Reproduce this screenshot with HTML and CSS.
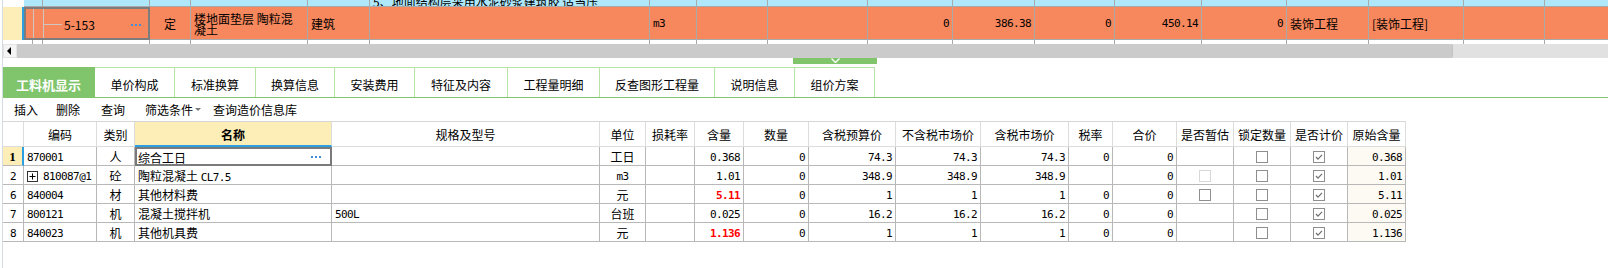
FILE: index.html
```html
<!DOCTYPE html>
<html lang="zh-CN">
<head>
    <meta charset="UTF-8">
    <title>工料机显示</title>
    <link rel="stylesheet" href="styles.css">
</head>
<body>
<div class="app">
    <div class="upper">
        <div class="ugrid">
            <!-- previous row, scrolled mostly out of view -->
            <div class="uc rh plain"></div>
            <div class="uc blue span2"></div>
            <div class="uc blue"></div>
            <div class="uc blue"></div>
            <div class="uc blue"></div>
            <div class="uc blue"></div>
            <div class="uc blue"><span class="cut">5、地面结构层采用水泥砂浆建筑胶 适当压</span></div>
            <div class="uc blue"></div>
            <div class="uc blue"></div>
            <div class="uc blue"></div>
            <div class="uc blue"></div>
            <div class="uc blue"></div>
            <div class="uc blue"></div>
            <div class="uc blue"></div>
            <div class="uc blue"></div>
            <div class="uc blue"></div>
            <div class="uc blue"></div>
            <div class="uc blue"></div>
            <div class="uc blue"></div>

            <!-- current row -->
            <div class="uc rh cur-rh"></div>
            <div class="uc orange sel tree span3">
                <span class="tl"></span><span class="tl tl2"></span><span class="branch"></span>
                <span class="code">5-153</span>
                <span class="dots"><i></i><i></i><i></i></span>
            </div>
            <div class="uc orange center">定</div>
            <div class="uc orange wrap">楼地面垫层 陶粒混凝土</div>
            <div class="uc orange">建筑</div>
            <div class="uc orange"></div>
            <div class="uc orange mono">m3</div>
            <div class="uc orange"></div>
            <div class="uc orange"></div>
            <div class="uc orange mono right">0</div>
            <div class="uc orange mono right">386.38</div>
            <div class="uc orange mono right">0</div>
            <div class="uc orange mono right">450.14</div>
            <div class="uc orange mono right">0</div>
            <div class="uc orange">装饰工程</div>
            <div class="uc orange">[装饰工程]</div>
            <div class="uc orange"></div>
            <div class="uc orange"></div>

            <!-- next row, cut by the scrollbar -->
            <div class="uc rh plain"></div>
            <div class="uc nb"></div>
            <div class="uc nb"></div>
            <div class="uc nb"></div>
            <div class="uc nb"></div>
            <div class="uc nb"></div>
            <div class="uc nb"></div>
            <div class="uc nb"></div>
            <div class="uc nb"></div>
            <div class="uc nb"></div>
            <div class="uc nb"></div>
            <div class="uc nb"></div>
            <div class="uc nb"></div>
            <div class="uc nb"></div>
            <div class="uc nb"></div>
            <div class="uc nb"></div>
            <div class="uc nb"></div>
            <div class="uc nb"></div>
            <div class="uc nb"></div>
        </div>
    </div>

    <div class="hscroll">
        <div class="sb-btn"></div>
        <div class="sb-thumb"></div>
    </div>

    <div class="splitter">
        <div class="handle">
            <svg width="9" height="5" viewBox="0 0 9 5"><polyline points="0.5,0.5 4.5,4.5 8.5,0.5" fill="none" stroke="#fff" stroke-width="1.3"/></svg>
        </div>
    </div>

    <div class="tabs">
        <div class="tab active" style="width:92px">工料机显示</div>
        <div class="tab" style="width:80px">单价构成</div>
        <div class="tab" style="width:81px">标准换算</div>
        <div class="tab" style="width:79px">换算信息</div>
        <div class="tab" style="width:80px">安装费用</div>
        <div class="tab" style="width:93px">特征及内容</div>
        <div class="tab" style="width:92px">工程量明细</div>
        <div class="tab" style="width:115px">反查图形工程量</div>
        <div class="tab" style="width:80px">说明信息</div>
        <div class="tab" style="width:80px">组价方案</div>
    </div>

    <div class="toolbar">
        <span class="tool">插入</span>
        <span class="tool">删除</span>
        <span class="tool">查询</span>
        <span class="tool drop">筛选条件<i class="caret"></i></span>
        <span class="tool">查询造价信息库</span>
    </div>

    <div class="lgrid">
        <div class="hc"></div>
        <div class="hc">编码</div>
        <div class="hc">类别</div>
        <div class="hc hc-sel">名称</div>
        <div class="hc">规格及型号</div>
        <div class="hc">单位</div>
        <div class="hc">损耗率</div>
        <div class="hc">含量</div>
        <div class="hc">数量</div>
        <div class="hc">含税预算价</div>
        <div class="hc">不含税市场价</div>
        <div class="hc">含税市场价</div>
        <div class="hc">税率</div>
        <div class="hc">合价</div>
        <div class="hc">是否暂估</div>
        <div class="hc">锁定数量</div>
        <div class="hc">是否计价</div>
        <div class="hc">原始含量</div>

        <div class="dc rn rn-cur">1</div>
        <div class="dc mono">870001</div>
        <div class="dc center">人</div>
        <div class="dc sel-cell">综合工日<span class="dots"><i></i><i></i><i></i></span></div>
        <div class="dc"></div>
        <div class="dc center">工日</div>
        <div class="dc"></div>
        <div class="dc mono right">0.368</div>
        <div class="dc mono right">0</div>
        <div class="dc mono right">74.3</div>
        <div class="dc mono right">74.3</div>
        <div class="dc mono right">74.3</div>
        <div class="dc mono right">0</div>
        <div class="dc mono right">0</div>
        <div class="dc center"></div>
        <div class="dc center"><span class="cb"></span></div>
        <div class="dc center"><span class="cb"><svg width="10" height="10" viewBox="0 0 10 10"><polyline points="2,5 4,7.2 8,2.8" fill="none" stroke="#6f6f6f" stroke-width="1.2"/></svg></span></div>
        <div class="dc mono right orig">0.368</div>

        <div class="dc rn mono">2</div>
        <div class="dc mono code-cell"><span class="plus"><svg width="11" height="11" viewBox="0 0 11 11"><rect x="0.5" y="0.5" width="10" height="10" fill="#fff" stroke="#333"/><path d="M2.5 5.5h6M5.5 2.5v6" stroke="#000"/></svg></span>810087@1</div>
        <div class="dc center">砼</div>
        <div class="dc"><span>陶粒混凝土 <span class="mono">CL7.5</span></span></div>
        <div class="dc"></div>
        <div class="dc center mono">m3</div>
        <div class="dc"></div>
        <div class="dc mono right">1.01</div>
        <div class="dc mono right">0</div>
        <div class="dc mono right">348.9</div>
        <div class="dc mono right">348.9</div>
        <div class="dc mono right">348.9</div>
        <div class="dc"></div>
        <div class="dc mono right">0</div>
        <div class="dc center"><span class="cb dis"></span></div>
        <div class="dc center"><span class="cb"></span></div>
        <div class="dc center"><span class="cb"><svg width="10" height="10" viewBox="0 0 10 10"><polyline points="2,5 4,7.2 8,2.8" fill="none" stroke="#6f6f6f" stroke-width="1.2"/></svg></span></div>
        <div class="dc mono right orig">1.01</div>

        <div class="dc rn mono">6</div>
        <div class="dc mono">840004</div>
        <div class="dc center">材</div>
        <div class="dc">其他材料费</div>
        <div class="dc"></div>
        <div class="dc center">元</div>
        <div class="dc"></div>
        <div class="dc mono right red">5.11</div>
        <div class="dc mono right">0</div>
        <div class="dc mono right">1</div>
        <div class="dc mono right">1</div>
        <div class="dc mono right">1</div>
        <div class="dc mono right">0</div>
        <div class="dc mono right">0</div>
        <div class="dc center"><span class="cb"></span></div>
        <div class="dc center"><span class="cb"></span></div>
        <div class="dc center"><span class="cb"><svg width="10" height="10" viewBox="0 0 10 10"><polyline points="2,5 4,7.2 8,2.8" fill="none" stroke="#6f6f6f" stroke-width="1.2"/></svg></span></div>
        <div class="dc mono right orig">5.11</div>

        <div class="dc rn mono">7</div>
        <div class="dc mono">800121</div>
        <div class="dc center">机</div>
        <div class="dc">混凝土搅拌机</div>
        <div class="dc mono">500L</div>
        <div class="dc center">台班</div>
        <div class="dc"></div>
        <div class="dc mono right">0.025</div>
        <div class="dc mono right">0</div>
        <div class="dc mono right">16.2</div>
        <div class="dc mono right">16.2</div>
        <div class="dc mono right">16.2</div>
        <div class="dc mono right">0</div>
        <div class="dc mono right">0</div>
        <div class="dc center"></div>
        <div class="dc center"><span class="cb"></span></div>
        <div class="dc center"><span class="cb"><svg width="10" height="10" viewBox="0 0 10 10"><polyline points="2,5 4,7.2 8,2.8" fill="none" stroke="#6f6f6f" stroke-width="1.2"/></svg></span></div>
        <div class="dc mono right orig">0.025</div>

        <div class="dc rn mono">8</div>
        <div class="dc mono">840023</div>
        <div class="dc center">机</div>
        <div class="dc">其他机具费</div>
        <div class="dc"></div>
        <div class="dc center">元</div>
        <div class="dc"></div>
        <div class="dc mono right red">1.136</div>
        <div class="dc mono right">0</div>
        <div class="dc mono right">1</div>
        <div class="dc mono right">1</div>
        <div class="dc mono right">1</div>
        <div class="dc mono right">0</div>
        <div class="dc mono right">0</div>
        <div class="dc center"></div>
        <div class="dc center"><span class="cb"></span></div>
        <div class="dc center"><span class="cb"><svg width="10" height="10" viewBox="0 0 10 10"><polyline points="2,5 4,7.2 8,2.8" fill="none" stroke="#6f6f6f" stroke-width="1.2"/></svg></span></div>
        <div class="dc mono right orig">1.136</div>
    </div>
</div>
</body>
</html>
```

FILE: styles.css
```css
* {
    box-sizing: border-box;
}
body {
    margin: 0;
    width: 1608px;
    height: 268px;
    overflow: hidden;
    background-color: #fff;
    color: #000;
    font-family: "Noto Sans CJK SC", "Microsoft YaHei", sans-serif;
    font-size: 12px;
}
.app {
    margin-left: 2px;
    border-left: 1px solid #d3dbe3;
    height: 268px;
}

/* upper grid (budget items) */
.upper {
    height: 44px;
    overflow: hidden;
}
.ugrid {
    display: grid;
    grid-template-columns: 21px 9px 10px 107px 41px 117px 62px 280px 47px 71px 100px 85px 82px 80px 87px 85px 82px 95px 81px 100px;
    grid-template-rows: 7px 33px 4px;
}
.uc {
    border-right: 1px solid #a9a9a9;
    border-bottom: 1px solid #a9a9a9;
    overflow: hidden;
    white-space: nowrap;
    display: flex;
    align-items: center;
    padding: 2px 3px 0;
    line-height: 12px;
}
.uc.plain {
    border: none;
}
.uc.nb {
    border-bottom: none;
}
.span2 {
    grid-column: span 2;
}
.span3 {
    grid-column: span 3;
}
.blue {
    background-color: #aee8fa;
    align-items: flex-end;
    padding: 0 3px;
}
.cut {
    display: block;
    line-height: 12px;
    margin-bottom: -2px;
}
.cur-rh {
    background-color: #fdedb6;
    border-bottom: none;
    border-right: 2px solid #2c9fe0;
}
.orange {
    background-color: #f7875c;
}
.sel {
    border: 2px solid #7d7d7d;
}
.tree {
    padding: 0;
    align-items: stretch;
}
.tl {
    width: 8px;
    border-right: 1px solid #cfc6c2;
}
.tl2 {
    width: 10px;
}
.branch {
    width: 18px;
    height: 1px;
    background-color: #cfc6c2;
    align-self: center;
    margin-top: 1px;
}
.code {
    align-self: center;
    margin-left: 2px;
    margin-top: 2px;
}
.dots {
    display: flex;
    gap: 2px;
    margin-left: auto;
    margin-right: 7px;
    align-self: center;
    margin-top: 2px;
}
.dots i {
    width: 2px;
    height: 2px;
    background-color: #3f8fd8;
}
.wrap {
    white-space: normal;
    padding-top: 1px;
    line-height: 11px;
}
.center {
    justify-content: center;
}
.right {
    justify-content: flex-end;
}
.mono {
    font-family: "DejaVu Sans Mono", "Liberation Mono", monospace;
    font-size: 11px;
    letter-spacing: -0.6px;
}

/* scrollbar */
.hscroll {
    display: flex;
    height: 14px;
    background-color: #e1e1e1;
}
.sb-btn {
    width: 14px;
    background-color: #f4f4f4;
    border: 1px solid #e4e4e4;
    display: flex;
    align-items: center;
    justify-content: center;
}
.sb-btn::before {
    content: "";
    border-right: 4px solid #000;
    border-top: 4px solid transparent;
    border-bottom: 4px solid transparent;
    margin-right: 2px;
}
.sb-thumb {
    width: 1436px;
    background-color: #cbcbcb;
    border-radius: 0 2px 2px 0;
    border-right: 1px solid #c2c2c2;
}

/* splitter */
.splitter {
    height: 9px;
}
.handle {
    margin-left: 790px;
    width: 84px;
    height: 6px;
    background-color: #80c46b;
    display: flex;
    justify-content: center;
    align-items: flex-start;
}
.handle svg {
    display: block;
}

/* tabs */
.tabs {
    display: flex;
    height: 31px;
    border-bottom: 1px solid #82c46f;
}
.tab {
    height: 30px;
    border-top: 1px solid #b7e3a7;
    border-right: 1px solid #b7e3a7;
    display: flex;
    align-items: center;
    justify-content: center;
    padding-top: 3px;
    font-size: 12px;
    flex-shrink: 0;
}
.tab.active {
    background-color: #80c46b;
    border-color: #80c46b;
    color: #fff;
    font-weight: bold;
    font-size: 13px;
}

/* toolbar */
.toolbar {
    height: 23px;
    display: flex;
    align-items: center;
    padding-left: 11px;
}
.tool {
    margin-right: 18px;
    display: flex;
    align-items: center;
}
.tool:nth-child(2) {
    margin-right: 21px;
}
.tool:nth-child(3) {
    margin-right: 20px;
}
.tool.drop {
    margin-right: 12px;
}
.caret {
    margin-left: 2px;
    border-top: 3px solid #777;
    border-left: 3px solid transparent;
    border-right: 3px solid transparent;
}

/* lower grid (resources) */
.lgrid {
    display: grid;
    grid-template-columns: 21px 73px 38px 197px 268px 46px 49px 49px 65px 87px 85px 88px 44px 64px 57px 57px 57px 58px;
    grid-template-rows: 25px repeat(5, 19px);
    width: 1403px;
    border-top: 1px solid #d6d6d6;
}
.hc {
    border-right: 1px solid #dcdcdc;
    border-bottom: 1px solid #dcdcdc;
    display: flex;
    align-items: center;
    justify-content: center;
    white-space: nowrap;
    padding-top: 1px;
}
.hc-sel {
    background-color: #fdedb6;
    border-bottom: 2px solid #2c9fe0;
    font-weight: bold;
}
.dc {
    border-right: 1px solid #b8b8b8;
    border-bottom: 1px solid #b8b8b8;
    display: flex;
    align-items: center;
    padding: 1px 3px 0 3px;
    white-space: nowrap;
    overflow: hidden;
}
.dc.mono {
    padding-top: 2px;
}
.rn {
    justify-content: center;
}
.rn-cur {
    background-color: #fdedb6;
    border-right: 2px solid #2c9fe0;
    font-family: "Liberation Serif", serif;
    font-weight: bold;
    font-size: 13px;
}
.sel-cell {
    border: 2px solid #7a7a7a;
    padding-left: 1px;
}
.sel-cell .dots {
    margin-right: 6px;
    margin-top: 0;
}
.code-cell {
    gap: 5px;
}
.plus svg {
    display: block;
}
.red {
    color: #ff0000;
    font-weight: bold;
}
.orig {
    background-color: #fdf9f3;
}
.cb {
    width: 12px;
    height: 12px;
    border: 1px solid #8e8e8e;
    background-color: #fff;
    display: flex;
    align-items: center;
    justify-content: center;
}
.cb.dis {
    border-color: #d8d8d8;
}
.cb svg {
    display: block;
}
```
